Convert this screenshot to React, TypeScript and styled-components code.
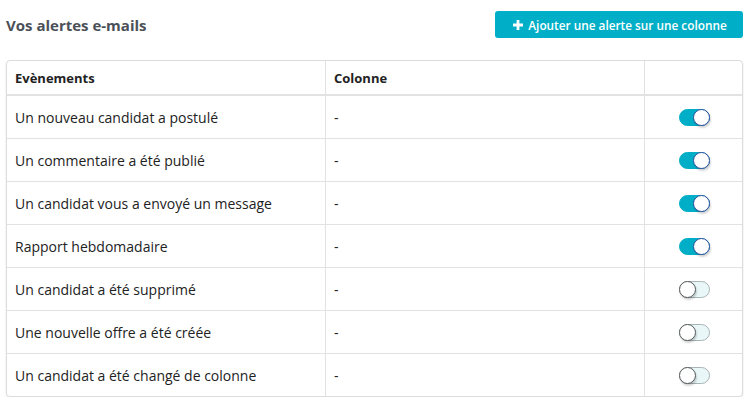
import React, { useState } from 'react';
import styled, { createGlobalStyle } from 'styled-components';

const GlobalStyle = createGlobalStyle`
  body {
    margin: 0;
    background: #fff;
    font-family: 'Open Sans', 'Liberation Sans', sans-serif;
    color: #222;
  }
`;

const Page = styled.div`
  width: 737px;
  padding: 11px 8px 0 6px;
`;

const TopBar = styled.div`
  display: flex;
  align-items: center;
  justify-content: space-between;
  height: 27px;
  margin-bottom: 22px;
`;

const Title = styled.h2`
  margin: 0;
  font-size: 15px;
  font-weight: 700;
  color: #4b5058;
`;

const AddButton = styled.button`
  display: flex;
  align-items: center;
  justify-content: center;
  gap: 5px;
  width: 248px;
  height: 27px;
  border: none;
  border-radius: 3px;
  background: #00afc7;
  color: #fff;
  font-family: inherit;
  font-size: 11.8px;
  font-weight: 600;
  padding: 0 0 0 2px;
  cursor: pointer;
`;

const Table = styled.div`
  border: 1px solid #dcdcdc;
  border-radius: 4px;
  box-shadow: 0 1px 2px rgba(0, 0, 0, 0.12);
  overflow: hidden;
`;

const Row = styled.div<{ $head?: boolean }>`
  display: grid;
  grid-template-columns: 318px 319px 1fr;
  height: ${p => (p.$head ? 33 : 42)}px;
  border-bottom: ${p => (p.$head ? '2px solid #e2e2e2' : '1px solid #e2e2e2')};
  &:last-child {
    border-bottom: none;
  }
`;

const Cell = styled.div<{ $head?: boolean; $center?: boolean }>`
  display: flex;
  align-items: center;
  justify-content: ${p => (p.$center ? 'center' : 'flex-start')};
  padding: 0 8px;
  font-size: ${p => (p.$head ? 13 : 14)}px;
  font-weight: ${p => (p.$head ? 700 : 400)};
  color: #222;
  & + & {
    border-left: 1px solid #e2e2e2;
  }
`;

const Track = styled.button<{ $on: boolean }>`
  position: relative;
  width: 31px;
  height: 17px;
  padding: 0;
  border-radius: 9px;
  border: 1px solid ${p => (p.$on ? '#00afc7' : '#a9b4b6')};
  background: ${p => (p.$on ? '#00afc7' : '#eaf7f9')};
  cursor: pointer;
  margin-left: 1px;
`;

const Knob = styled.span<{ $on: boolean }>`
  position: absolute;
  top: -1px;
  left: ${p => (p.$on ? '13px' : '-1px')};
  width: 17px;
  height: 17px;
  box-sizing: border-box;
  border-radius: 50%;
  background: #fff;
  border: 1.5px solid ${p => (p.$on ? '#2c4f9e' : '#555a5c')};
  box-shadow: 1px 2px 2px rgba(0, 0, 0, 0.18);
`;

const Toggle: React.FC<{ on: boolean; onChange: () => void }> = ({ on, onChange }) => (
  <Track $on={on} onClick={onChange}>
    <Knob $on={on} />
  </Track>
);

const initial = [
  { label: 'Un nouveau candidat a postulé', on: true },
  { label: 'Un commentaire a été publié', on: true },
  { label: 'Un candidat vous a envoyé un message', on: true },
  { label: 'Rapport hebdomadaire', on: true },
  { label: 'Un candidat a été supprimé', on: false },
  { label: 'Une nouvelle offre a été créée', on: false },
  { label: 'Un candidat a été changé de colonne', on: false },
];

export default function App() {
  const [alerts, setAlerts] = useState(initial);

  const flip = (i: number) =>
    setAlerts(a => a.map((x, j) => (j === i ? { ...x, on: !x.on } : x)));

  return (
    <Page>
      <GlobalStyle />
      <TopBar>
        <Title>Vos alertes e-mails</Title>
        <AddButton>
          <svg width="10" height="10" viewBox="0 0 10 10">
            <path d="M3.6 0h2.8v3.6H10v2.8H6.4V10H3.6V6.4H0V3.6h3.6z" fill="#fff" />
          </svg>
          Ajouter une alerte sur une colonne
        </AddButton>
      </TopBar>
      <Table>
        <Row $head>
          <Cell $head>Evènements</Cell>
          <Cell $head>Colonne</Cell>
          <Cell $head />
        </Row>
        {alerts.map((a, i) => (
          <Row key={a.label}>
            <Cell>{a.label}</Cell>
            <Cell>-</Cell>
            <Cell $center>
              <Toggle on={a.on} onChange={() => flip(i)} />
            </Cell>
          </Row>
        ))}
      </Table>
    </Page>
  );
}
